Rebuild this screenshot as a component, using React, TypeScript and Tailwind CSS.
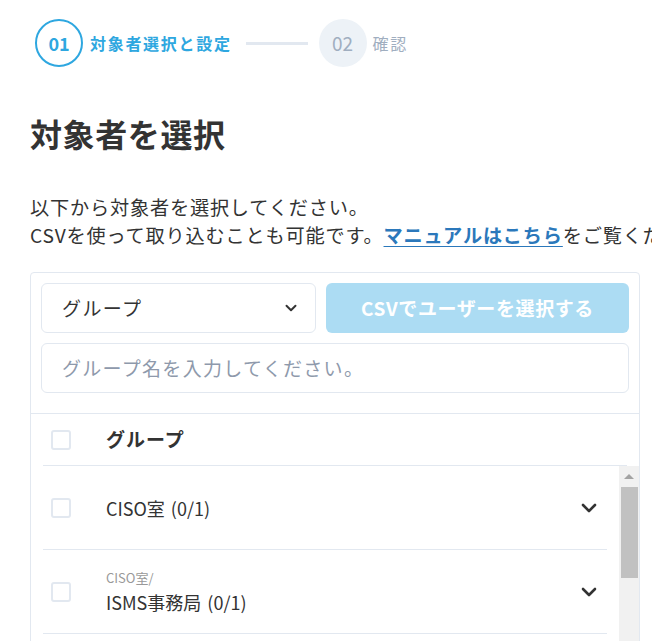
import React from "react";

const font = { fontFamily: '"Noto Sans CJK JP", "Noto Sans", sans-serif' };

const Chevron = ({ className }: { className?: string }) => (
  <svg viewBox="0 0 16 10" className={className} fill="none">
    <polyline
      points="2,2 8,8 14,2"
      stroke="currentColor"
      strokeWidth="2.6"
      strokeLinecap="round"
      strokeLinejoin="round"
    />
  </svg>
);

const Checkbox = () => (
  <div className="w-[20px] h-[20px] shrink-0 rounded-[3px] border-2 border-[#e2e8f0] bg-white" />
);

const groups = [
  { parent: "", name: "CISO室", count: "(0/1)" },
  { parent: "CISO室/", name: "ISMS事務局", count: "(0/1)" },
];

export default function App() {
  return (
    <div
      className="h-[641px] w-full overflow-hidden bg-white text-[#333] pl-[30px] pt-[19px]"
      style={font}
    >
      {/* stepper */}
      <div className="flex items-center pl-[5px] h-[48px]">
        <div className="w-[48px] h-[48px] rounded-full border-2 border-[#2ea7e0] flex items-center justify-center text-[18px] font-bold text-[#2ea7e0]">
          01
        </div>
        <span className="ml-[7px] text-[16px] tracking-[1.7px] font-bold text-[#2ea7e0]">
          対象者選択と設定
        </span>
        <div className="ml-[14px] w-[62px] h-[3px] bg-[#e2e8f0]" />
        <div className="ml-[11px] w-[48px] h-[48px] rounded-full bg-[#edf2f7] flex items-center justify-center text-[19px] text-[#a0aec0]">
          02
        </div>
        <span className="ml-[6px] text-[16px] tracking-[1.7px] text-[#a0aec0]">確認</span>
      </div>

      <h1 className="mt-[46px] text-[32px] leading-[40px] font-bold tracking-[0.6px] text-[#333]">
        対象者を選択
      </h1>

      <div className="mt-[40px] text-[19.2px] leading-[28px] tracking-[0.8px] whitespace-nowrap">
        <p>以下から対象者を選択してください。</p>
        <p>
          CSVを使って取り込むことも可能です。
          <a className="font-bold text-[#2b78bb] underline underline-offset-[3px]">
            マニュアルはこちら
          </a>
          をご覧ください。
        </p>
      </div>

      {/* panel */}
      <div className="mt-[23px] w-[610px] border border-[#e2e8f0] rounded-[4px]">
        <div className="p-[10px] pb-[20px] border-b border-[#e2e8f0]">
          <div className="flex gap-[10px]">
            <div className="w-[275px] h-[50px] border border-[#e2e8f0] rounded-[6px] flex items-center justify-between pl-[20px] pr-[18px] text-[19px] tracking-[1.4px]">
              <span>グループ</span>
              <Chevron className="w-[12px] h-[8px] text-[#333]" />
            </div>
            <button className="flex-1 h-[50px] rounded-[6px] bg-[#acdcf3] text-white font-bold text-[19px] tracking-[0.6px]">
              CSVでユーザーを選択する
            </button>
          </div>
          <div className="mt-[10px] h-[50px] border border-[#e2e8f0] rounded-[6px] flex items-center pl-[20px] text-[19px] tracking-[1.3px] text-[#8e99ab]">
            グループ名を入力してください。
          </div>
        </div>

        <div className="pl-[12px]">
          <div className="mr-[12px] h-[52px] border-b border-[#e2e8f0] flex items-center pl-[8px]">
            <Checkbox />
            <span className="ml-[35px] text-[19px] font-bold tracking-[1px]">グループ</span>
          </div>

          <div className="flex h-[300px]">
            <div className="flex-1 pr-[12px]">
              {groups.map((g, i) => (
                <div
                  key={i}
                  className="h-[84px] border-b border-[#e2e8f0] flex items-center pl-[8px] pr-[10px]"
                >
                  <Checkbox />
                  <div className="ml-[35px] flex-1">
                    {g.parent && (
                      <div className="text-[13px] leading-[16px] mb-[4px] text-[#999]">
                        {g.parent}
                      </div>
                    )}
                    <div className="text-[18px] leading-[24px]">
                      {g.name}
                      <span className="ml-[6px]">{g.count}</span>
                    </div>
                  </div>
                  <Chevron className="w-[16px] h-[10px] text-[#333]" />
                </div>
              ))}
            </div>
            <div className="w-[20px] bg-[#f1f1f1] flex flex-col items-center">
              <div className="h-[21px] flex items-center justify-center">
                <div className="w-0 h-0 border-l-[5px] border-r-[5px] border-b-[5px] border-l-transparent border-r-transparent border-b-[#a3a3a3]" />
              </div>
              <div className="w-[17px] h-[91px] bg-[#c1c1c1]" />
            </div>
          </div>
        </div>
      </div>
    </div>
  );
}
